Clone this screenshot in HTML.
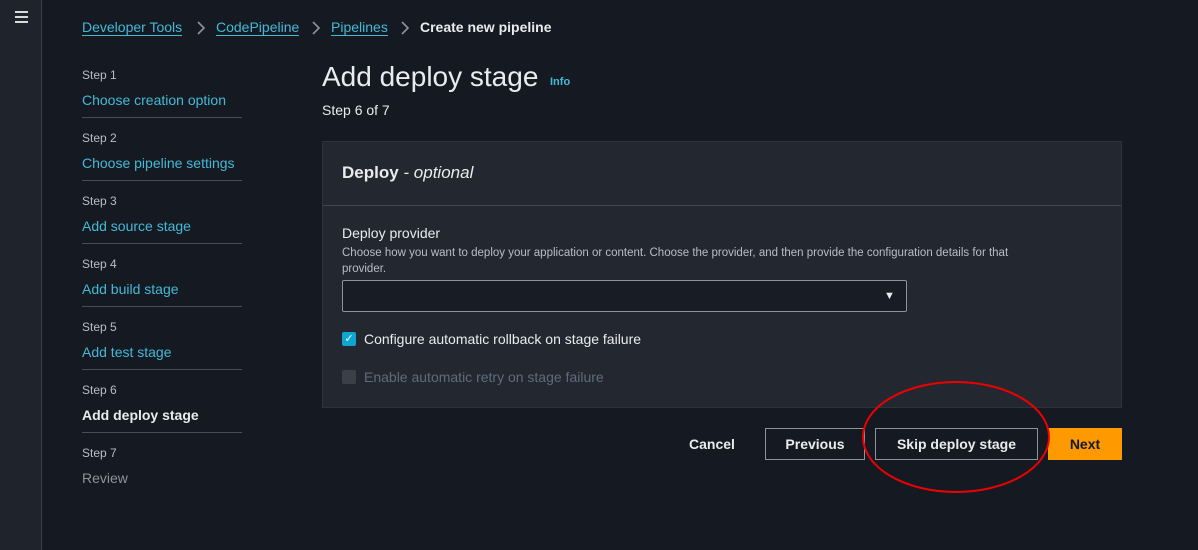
<!DOCTYPE html>
<html><head><meta charset="utf-8"><style>
*{margin:0;padding:0;box-sizing:border-box}
body{width:1198px;height:550px;background:#151a22;font-family:"Liberation Sans",sans-serif;color:#e9ebed;position:relative;overflow:hidden}
.side{position:absolute;left:0;top:0;width:42px;height:550px;background:#1f242c;border-right:1px solid #3a4048}
.ham{position:absolute;left:15px;top:11px;width:13px}
.ham i{display:block;height:2px;background:#d5dbdb;margin-bottom:3px}
.a{position:absolute;white-space:nowrap}
.lnk{color:#44b9d6;border-bottom:1px solid #44b9d6}
.bc{top:19px;font-size:14px}
.st{font-size:12px;color:#b6bec9}
.sl{font-size:14px;color:#44b9d6}
.hr{position:absolute;left:82px;width:160px;height:1px;background:#464d55}
.panel{position:absolute;left:322px;top:141px;width:800px;height:267px;background:#232830;border:1px solid #2d333b}
.btn{position:absolute;top:428px;height:32px;font-size:14px;font-weight:bold;display:flex;align-items:center;justify-content:center}
</style></head><body>
<div class="side"><div class="ham"><i></i><i></i><i></i></div></div>
<span class="a bc lnk" style="left:82px">Developer Tools</span>
<svg class="a" style="left:196px;top:21px" width="10" height="14"><path d="M2 1l6 6-6 6" fill="none" stroke="#8d9399" stroke-width="1.6"/></svg>
<span class="a bc lnk" style="left:216px">CodePipeline</span>
<svg class="a" style="left:311px;top:21px" width="10" height="14"><path d="M2 1l6 6-6 6" fill="none" stroke="#8d9399" stroke-width="1.6"/></svg>
<span class="a bc lnk" style="left:331px">Pipelines</span>
<svg class="a" style="left:400px;top:21px" width="10" height="14"><path d="M2 1l6 6-6 6" fill="none" stroke="#8d9399" stroke-width="1.6"/></svg>
<span class="a bc" style="left:420px;font-weight:bold;color:#e9ebed">Create new pipeline</span>

<span class="a st" style="left:82px;top:68px">Step 1</span><span class="a sl" style="left:82px;top:92px">Choose creation option</span><div class="hr" style="top:117px"></div>
<span class="a st" style="left:82px;top:131px">Step 2</span><span class="a sl" style="left:82px;top:155px">Choose pipeline settings</span><div class="hr" style="top:180px"></div>
<span class="a st" style="left:82px;top:194px">Step 3</span><span class="a sl" style="left:82px;top:218px">Add source stage</span><div class="hr" style="top:243px"></div>
<span class="a st" style="left:82px;top:257px">Step 4</span><span class="a sl" style="left:82px;top:281px">Add build stage</span><div class="hr" style="top:306px"></div>
<span class="a st" style="left:82px;top:320px">Step 5</span><span class="a sl" style="left:82px;top:344px">Add test stage</span><div class="hr" style="top:369px"></div>
<span class="a st" style="left:82px;top:383px">Step 6</span><span class="a sl" style="left:82px;top:407px;color:#e9ebed;font-weight:bold">Add deploy stage</span><div class="hr" style="top:432px"></div>
<span class="a st" style="left:82px;top:446px">Step 7</span><span class="a sl" style="left:82px;top:470px;color:#8d9399">Review</span>

<span class="a" style="left:322px;top:61px;font-size:28px">Add deploy stage</span>
<span class="a" style="left:550px;top:76px;font-size:11px;font-weight:bold;color:#44b9d6">Info</span>
<span class="a" style="left:322px;top:102px;font-size:14px">Step 6 of 7</span>

<div class="panel">
 <div style="height:64px;border-bottom:1px solid #414750"></div>
</div>
<span class="a" style="left:342px;top:163px;font-size:17px;font-weight:bold">Deploy <span style="font-weight:normal;font-style:italic">- optional</span></span>
<span class="a" style="left:342px;top:225px;font-size:14px">Deploy provider</span>
<div class="a" style="left:342px;top:245px;font-size:11.5px;color:#b6bec9;line-height:16px">Choose how you want to deploy your application or content. Choose the provider, and then provide the configuration details for that<br>provider.</div>
<div class="a" style="left:342px;top:280px;width:565px;height:32px;background:#181c24;border:1px solid #8d9399;border-radius:2px"></div>
<span class="a" style="left:884px;top:290px;font-size:11px;color:#e9ebed">&#9660;</span>
<div class="a" style="left:342px;top:332px;width:14px;height:14px;background:#0ea5d0;border-radius:2px;color:#fff;font-size:11px;text-align:center;line-height:14px">&#10003;</div>
<span class="a" style="left:364px;top:331px;font-size:14px">Configure automatic rollback on stage failure</span>
<div class="a" style="left:342px;top:370px;width:14px;height:14px;background:#3a4048;border-radius:2px"></div>
<span class="a" style="left:364px;top:369px;font-size:14px;color:#5f6b7a">Enable automatic retry on stage failure</span>

<span class="btn" style="left:680px;width:64px">Cancel</span>
<span class="btn" style="left:765px;width:100px;border:1px solid #8d9399;background:#151a22">Previous</span>
<span class="btn" style="left:875px;width:163px;border:1px solid #8d9399;background:#151a22">Skip deploy stage</span>
<span class="btn" style="left:1048px;width:74px;background:#ff9900;color:#0f1b2a">Next</span>
<svg class="a" style="left:860px;top:380px" width="200" height="115"><ellipse cx="96" cy="57" rx="93" ry="55" fill="none" stroke="#e00" stroke-width="2"/></svg>
</body></html>
